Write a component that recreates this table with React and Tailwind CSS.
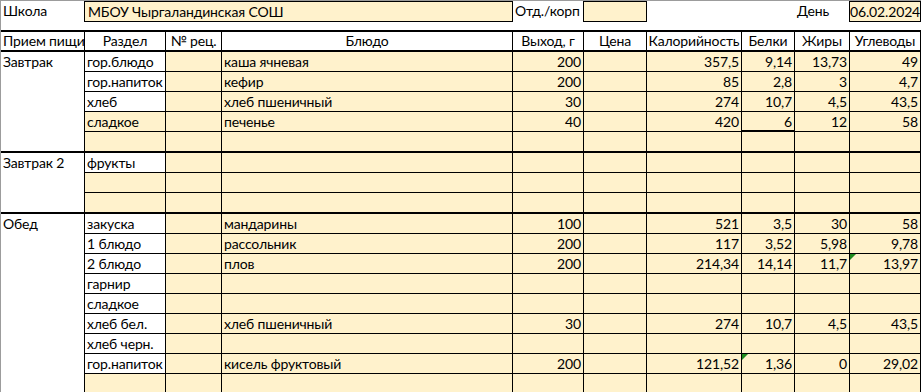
import React from "react";

const groups = [
  {
    name: "Завтрак",
    span: "row-span-5",
    rows: [
      { s: "гор.блюдо", d: "каша ячневая", v: "200", k: "357,5", b: "9,14", f: "13,73", u: "49" },
      { s: "гор.напиток", d: "кефир", v: "200", k: "85", b: "2,8", f: "3", u: "4,7" },
      { s: "хлеб", d: "хлеб пшеничный", v: "30", k: "274", b: "10,7", f: "4,5", u: "43,5" },
      { s: "сладкое", sy: true, d: "печенье", v: "40", k: "420", b: "6", f: "12", u: "58", thickB: true },
      { sy: true },
    ],
  },
  {
    name: "Завтрак 2",
    span: "row-span-3",
    rows: [{ s: "фрукты" }, { sy: true }, { sy: true }],
  },
  {
    name: "Обед",
    span: "row-span-9",
    rows: [
      { s: "закуска", d: "мандарины", v: "100", k: "521", b: "3,5", f: "30", u: "58" },
      { s: "1 блюдо", d: "рассольник", v: "200", k: "117", b: "3,52", f: "5,98", u: "9,78" },
      { s: "2 блюдо", d: "плов", v: "200", k: "214,34", b: "14,14", f: "11,7", u: "13,97", flagU: true },
      { s: "гарнир" },
      { s: "сладкое" },
      { s: "хлеб бел.", d: "хлеб пшеничный", v: "30", k: "274", b: "10,7", f: "4,5", u: "43,5" },
      { s: "хлеб черн." },
      { s: "гор.напиток", d: "кисель фруктовый", v: "200", k: "121,52", b: "1,36", f: "0", u: "29,02", flagB: true },
      { sy: true },
    ],
  },
];

const headers = ["Раздел", "№ рец.", "Блюдо", "Выход, г", "Цена", "Калорийность", "Белки", "Жиры", "Углеводы"];

// little green error marker excel puts in the corner
const Flag = () => (
  <span className="absolute left-0 top-0 w-0 h-0 border-t-[6px] border-r-[6px] border-t-[#1e8a1e] border-r-transparent" />
);

const Cell = ({ last, thick, yellow, right, flag, children }) => (
  <div
    className={
      "relative border-r border-black whitespace-nowrap overflow-hidden leading-[19px] " +
      (last || thick ? "border-b-2 " : "border-b ") +
      (last ? "h-[21px] " : "h-[20px] ") +
      (yellow ? "bg-[#fff2cc] " : "bg-white ") +
      (right ? "text-right pr-[2px]" : "pl-[2px]")
    }
  >
    {flag && <Flag />}
    {children}
  </div>
);

export default function App() {
  return (
    <div className="h-[392px] overflow-hidden bg-white text-black font-['Lato','Noto_Sans',sans-serif] text-[14px] tracking-[-0.15px]">
      <div className="w-[921px] border-l border-t border-[#9c9c9c]">
        {/* top line: school / department / date */}
        <div className="flex h-[21px] leading-[19px] whitespace-nowrap">
          <div className="w-[83px] pl-[2px]">Школа</div>
          <div className="w-[429px] border border-black bg-[#fff2cc] pl-[3px]">МБОУ Чыргаландинская СОШ</div>
          <div className="w-[70px] pl-[2px]">Отд./корп</div>
          <div className="w-[64px] border border-black bg-[#fff2cc]" />
          <div className="w-[148px]" />
          <div className="w-[54px] pl-[2px]">День</div>
          <div className="w-[72px] border border-black bg-[#fff2cc] text-right pr-[2px]">06.02.2024</div>
        </div>
        <div className="h-[8px]" />

        <div className="grid grid-cols-[84px_81px_56px_291px_71px_63px_95px_53px_55px_71px] border-t-2 border-black">
          <div className="h-[20px] border-r border-b-2 border-black leading-[18px] pl-[2px] whitespace-nowrap overflow-hidden">
            Прием пищи
          </div>
          {headers.map((h) => (
            <div
              key={h}
              className="h-[20px] border-r border-b-2 border-black leading-[18px] text-center whitespace-nowrap overflow-hidden"
            >
              {h}
            </div>
          ))}

          {groups.map((g) => (
            <React.Fragment key={g.name}>
              <div className={g.span + " border-r border-b-2 border-black bg-white pl-[2px] leading-[19px] whitespace-nowrap"}>
                {g.name}
              </div>
              {g.rows.map((r, i) => {
                const last = i === g.rows.length - 1;
                return (
                  <React.Fragment key={i}>
                    <Cell last={last} yellow={r.sy}>{r.s}</Cell>
                    <Cell last={last} yellow />
                    <Cell last={last} yellow>{r.d}</Cell>
                    <Cell last={last} yellow right>{r.v}</Cell>
                    <Cell last={last} yellow right />
                    <Cell last={last} yellow right>{r.k}</Cell>
                    <Cell last={last} thick={r.thickB} yellow right flag={r.flagB}>{r.b}</Cell>
                    <Cell last={last} yellow right>{r.f}</Cell>
                    <Cell last={last} yellow right flag={r.flagU}>{r.u}</Cell>
                  </React.Fragment>
                );
              })}
            </React.Fragment>
          ))}
        </div>
      </div>
    </div>
  );
}
